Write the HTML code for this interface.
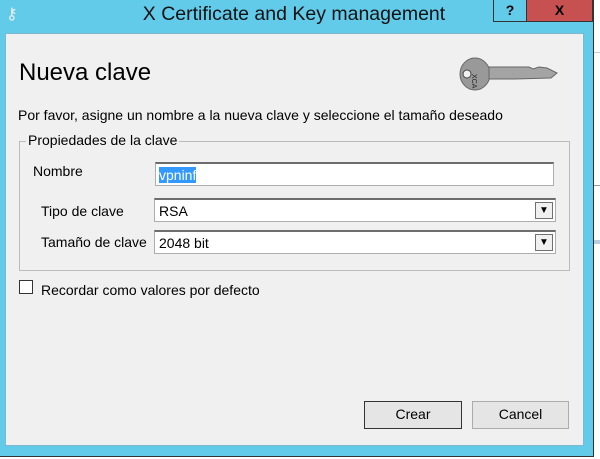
<!DOCTYPE html><html><head><style>
body{margin:0;width:600px;height:459px;background:#fff;position:relative;overflow:hidden;font-family:"Liberation Sans",sans-serif}
.a{position:absolute}
.win{left:0;top:0;width:593px;height:456px;background:#62cbea;border-right:1px solid #333;border-bottom:1px solid #333}
.cont{left:5px;top:33px;width:579px;height:413px;background:#f0f0f0;border:1px solid #7fb8cc;box-sizing:border-box}
.t{font-size:14px;color:#000}
.inp{background:#fff;border:1px solid #adadad;border-top:2px solid #6d6d6d;box-sizing:border-box}
.dd{width:18px;height:17px;border:1px solid #707070;background:#f0f0f0;box-sizing:border-box}
.btn{background:#e5e5e5;border:1px solid #acacac;box-sizing:border-box;font-size:14px;text-align:center;line-height:25px}
</style></head><body>
<div class="a" style="left:594px;top:52px;width:6px;height:1px;background:#ccc"></div>
<div class="a" style="left:594px;top:185px;width:6px;height:1px;background:#999"></div>
<div class="a" style="left:594px;top:240px;width:6px;height:4px;background:#bcd"></div>
<div class="a win"></div>
<div class="a" style="left:6px;top:4px;width:20px;height:20px;color:#eee;font-size:16px">⚷</div>
<div class="a" style="left:0;top:3px;width:588px;text-align:center;font-size:19.5px;color:#111">X Certificate and Key management</div>
<div class="a" style="left:493px;top:0;width:34px;height:22px;background:#62cbea;border:1px solid #333;border-top:0;box-sizing:border-box;text-align:center;font-weight:bold;font-size:14px;line-height:20px">?</div>
<div class="a" style="left:527px;top:0;width:66px;height:22px;background:#c75050;border:1px solid #333;border-top:0;border-left:0;box-sizing:border-box;text-align:center;font-weight:bold;font-size:14px;line-height:20px">X</div>
<div class="a cont"></div>
<div class="a" style="left:19px;top:59px;font-size:24px">Nueva clave</div>
<svg class="a" style="left:455px;top:52px" width="110" height="48"><ellipse cx="20" cy="22" rx="15" ry="16" fill="#999" stroke="#666"/><circle cx="12" cy="22" r="4" fill="#f0f0f0" stroke="#444"/><path d="M34 15h40l4 2 6-2 8 1 10 5-6 5-36 1-26 0z" fill="#a4a4a4" stroke="#666"/><text x="25" y="30" font-size="7" font-family="Liberation Sans" fill="#222" transform="rotate(90 25 22)">XCA</text></svg>
<div class="a t" style="left:18px;top:107px">Por favor, asigne un nombre a la nueva clave y seleccione el tamaño deseado</div>
<div class="a" style="left:19px;top:141px;width:551px;height:130px;border:1px solid #bbb;box-sizing:border-box"></div>
<div class="a t" style="left:26px;top:132px;background:#f0f0f0;padding:0 2px">Propiedades de la clave</div>
<div class="a t" style="left:33px;top:163px">Nombre</div>
<div class="a inp" style="left:155px;top:162px;width:399px;height:24px"><span style="background:#3399ff;color:#fff;font-size:14px;position:absolute;left:3px;top:3px">vpninf</span></div>
<div class="a t" style="left:41px;top:203px">Tipo de clave</div>
<div class="a inp" style="left:154px;top:198px;width:402px;height:24px"><span class="a t" style="left:4px;top:3px">RSA</span><div class="a dd" style="right:2px;top:2px;font-size:10px;text-align:center;line-height:15px">▼</div></div>
<div class="a t" style="left:41px;top:234px">Tamaño de clave</div>
<div class="a inp" style="left:154px;top:230px;width:402px;height:24px"><span class="a t" style="left:4px;top:3px">2048 bit</span><div class="a dd" style="right:2px;top:2px;font-size:10px;text-align:center;line-height:15px">▼</div></div>
<div class="a" style="left:19px;top:280px;width:14px;height:14px;background:#fff;border:1px solid #333;box-sizing:border-box"></div>
<div class="a t" style="left:41px;top:282px">Recordar como valores por defecto</div>
<div class="a btn" style="left:364px;top:401px;width:98px;height:28px;border-color:#333">Crear</div>
<div class="a btn" style="left:472px;top:401px;width:97px;height:28px">Cancel</div>
</body></html>
